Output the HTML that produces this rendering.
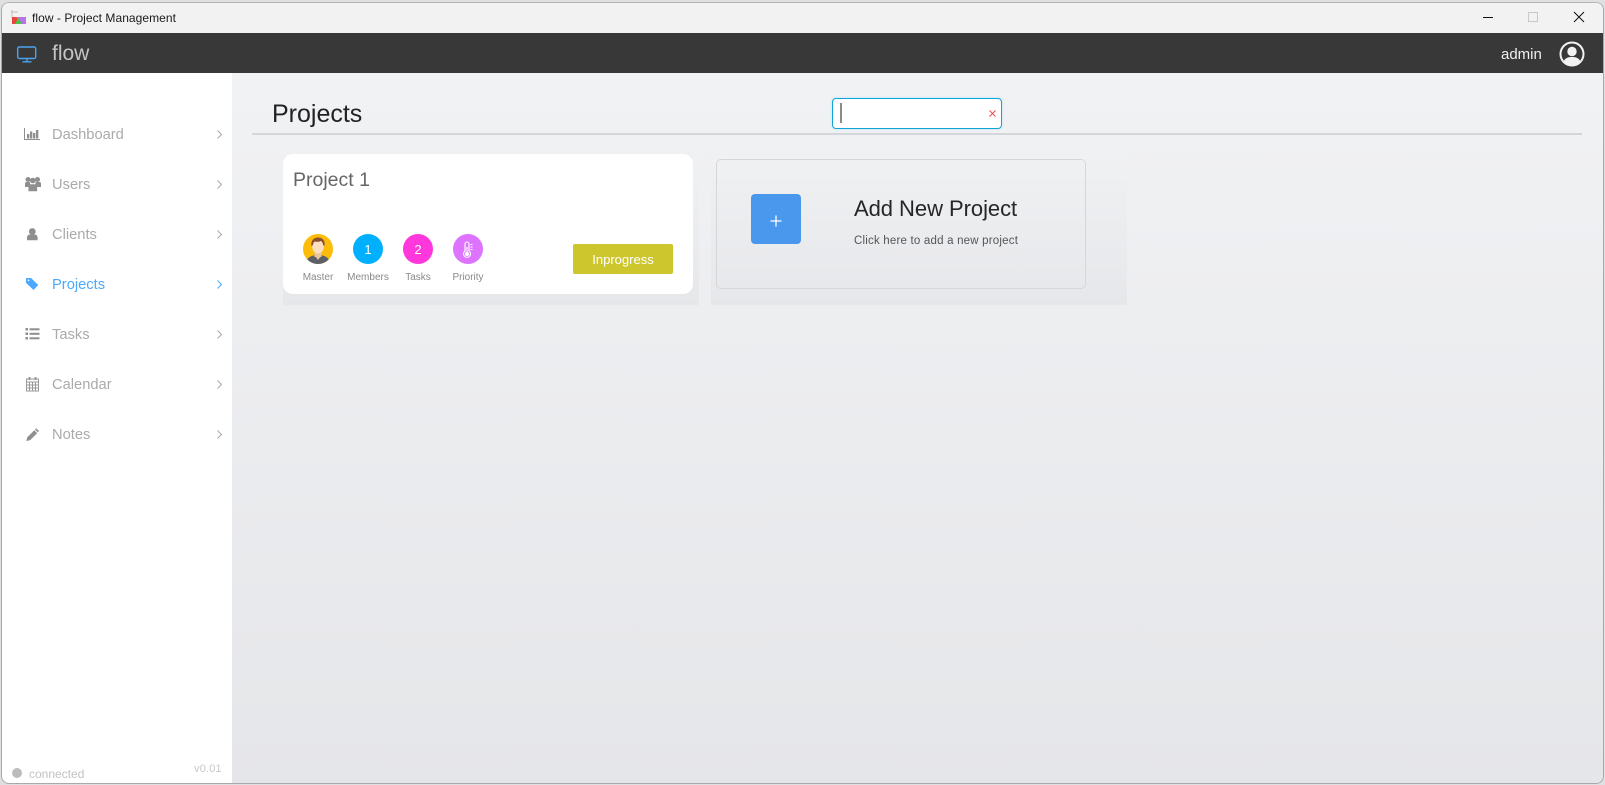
<!DOCTYPE html>
<html><head><meta charset="utf-8"><title>flow - Project Management</title>
<style>
*{box-sizing:border-box;margin:0;padding:0}
html,body{width:1605px;height:785px;overflow:hidden;background:#dfe0e2;font-family:"Liberation Sans",sans-serif}
.a{position:absolute;white-space:nowrap}
#win{position:absolute;left:1px;top:2px;width:1603px;height:782px;border:1px solid #a9a9a9;border-top-color:#b5b5b5;border-radius:8px;overflow:hidden;background:#fff}
.abs{position:absolute;left:0;top:0;width:1605px;height:785px}
.nav{position:absolute;left:52px;font-size:14.7px;color:#aaa;line-height:20px;height:20px}
.lab{position:absolute;font-size:10px;color:#8a8a8a;text-align:center;width:60px;top:271.500px;line-height:12px}
.cir{position:absolute;width:30px;height:30px;border-radius:50%;top:234px;color:#fff;text-align:center;font-size:13px;line-height:31px}
</style></head><body>
<div id="win"><div class="abs" style="left:-2px;top:-3px">
<div class="a" style="left:0;top:0;width:1605px;height:33px;background:#f2f2f2"></div>
<div class="a" style="left:0;top:33px;width:1605px;height:40px;background:#383838"></div>
<div class="a" style="left:232px;top:73px;width:1373px;height:712px;background:linear-gradient(#f1f2f4,#e5e6e9)"></div>

<svg class="a" style="left:10px;top:9px" width="17" height="16" viewBox="0 0 17 16"><path d="M2 1v8M1 3h7" stroke="#c9b9b9" fill="none"/><rect x="2" y="8" width="14" height="7" fill="#b873e6"/><rect x="2" y="8" width="5" height="7" fill="#e8453c"/><path d="M5 15l3.500-6 3.500 6z" fill="#4bc44b"/></svg>
<div class="a" style="left:32px;top:10px;font-size:12px;line-height:16px;color:#1a1a1a;letter-spacing:.05px">flow - Project Management</div>
<svg class="a" style="left:1475px;top:5px" width="120" height="24" viewBox="0 0 120 24" fill="none"><path d="M8 12.500h10" stroke="#111"/><rect x="53.500" y="7.500" width="9" height="9" stroke="#c8c8c8"/><path d="M99 7l10 10M109 7l-10 10" stroke="#111"/></svg>

<svg class="a" style="left:16px;top:45px" width="22" height="18" viewBox="0 0 22 18" fill="none" stroke="#4aa3f0" stroke-width="1.400"><rect x="1.700" y="2" width="18" height="11.500" rx="1.500"/><path d="M11 14v2.500M6.500 16.800h9"/></svg>
<div class="a" style="left:52px;top:41px;font-size:21px;line-height:26px;color:#c4c4c4">flow</div>
<div class="a" style="left:1501px;top:46px;font-size:15px;line-height:18px;color:#f0f0f0">admin</div>
<svg class="a" style="left:1559px;top:41px" width="26" height="26" viewBox="0 0 26 26"><circle cx="13" cy="13" r="11.500" fill="#383838" stroke="#f2f2f2" stroke-width="2"/><circle cx="13" cy="10.500" r="4.700" fill="#f2f2f2"/><path d="M4.500 20.500c2-4 5-4.500 8.500-4.500s6.500.5 8.500 4.500a11.500 11.500 0 0 1-17 0z" fill="#f2f2f2"/></svg>

<!-- sidebar -->
<svg class="a" style="left:23px;top:125px" width="18" height="18" viewBox="0 0 18 18" fill="#8f8f8f"><path d="M1 3h1v11h15v1H1z"/><rect x="4" y="9" width="2.300" height="4.500"/><rect x="7" y="6.500" width="2.300" height="7"/><rect x="10" y="8" width="2.300" height="5.500"/><rect x="13" y="5" width="2.300" height="8.500"/></svg>
<div class="nav" style="top:125px">Dashboard</div>
<svg class="a" style="left:24px;top:175px" width="18" height="18" viewBox="0 0 18 18" fill="#8f8f8f"><circle cx="4" cy="4.500" r="2.500"/><circle cx="13.500" cy="4.500" r="2.500"/><circle cx="8.800" cy="5.500" r="2.800"/><path d="M1 8.500c0-1 .8-1.500 1.700-1.500h3.300v5H1zM11.500 7h3.800c.9 0 1.700.5 1.700 1.500V12h-5.500z"/><path d="M4.500 11c0-1 1-1.800 2-1.800h4.600c1 0 2 .8 2 1.800v5.300H4.500z"/></svg>
<div class="nav" style="top:175px">Users</div>
<svg class="a" style="left:25px;top:225px" width="16" height="18" viewBox="0 0 16 18" fill="#8f8f8f"><circle cx="7.300" cy="6.500" r="3.400"/><path d="M2 15.200v-2.700c0-2 1.500-3 3-3h4.600c1.500 0 3 1 3 3v2.700z"/></svg>
<div class="nav" style="top:225px">Clients</div>
<svg class="a" style="left:25px;top:275px" width="16" height="18" viewBox="0 0 16 18" fill="#4aa8ff"><path d="M1 3h5l7.300 7-4.800 5-7.500-7.300z"/><circle cx="3.500" cy="5.300" r=".9" fill="#fff"/></svg>
<div class="nav" style="top:275px;color:#4aa8ff">Projects</div>
<svg class="a" style="left:24px;top:325px" width="18" height="18" viewBox="0 0 18 18" fill="#8f8f8f"><rect x="1.500" y="3" width="2.500" height="2.500"/><rect x="1.500" y="7.500" width="2.500" height="2.500"/><rect x="1.500" y="12" width="2.500" height="2.500"/><rect x="5.500" y="3.300" width="10" height="2"/><rect x="5.500" y="7.800" width="10" height="2"/><rect x="5.500" y="12.300" width="10" height="2"/></svg>
<div class="nav" style="top:325px">Tasks</div>
<svg class="a" style="left:25px;top:375px" width="16" height="18" viewBox="0 0 16 18" fill="none" stroke="#999"><rect x="1.500" y="4" width="12" height="12"/><path d="M1.500 7h12M1.500 10h12M1.500 13h12M4.500 7v9M7.500 7v9M10.500 7v9"/><path d="M4.500 2v3M10.500 2v3" stroke-width="2"/></svg>
<div class="nav" style="top:375px">Calendar</div>
<svg class="a" style="left:25px;top:425px" width="16" height="18" viewBox="0 0 16 18" fill="#8f8f8f"><path d="M1.300 16l1-3.800 7-7 2.900 2.900-7 7z"/><path d="M10 4.500l1.200-1.300 2.800 2.800-1.200 1.300z"/></svg>
<div class="nav" style="top:425px">Notes</div>
<svg class="a" style="left:216px;top:124px" width="8" height="320" viewBox="0 0 8 320" fill="none" stroke="#a8a8a8" stroke-width="1"><path d="M1.500 6.500l4 4-4 4M1.500 56.500l4 4-4 4M1.500 106.500l4 4-4 4M1.500 206.500l4 4-4 4M1.500 256.500l4 4-4 4M1.500 306.500l4 4-4 4"/><path d="M1.500 156.500l4 4-4 4" stroke="#4aa8ff"/></svg>
<div class="a" style="left:12px;top:768px;width:10px;height:10px;border-radius:50%;background:#bcbcbc"></div>
<div class="a" style="left:29px;top:767px;font-size:12px;line-height:14px;color:#c2c2c2">connected</div>
<div class="a" style="left:194px;top:762px;font-size:11.300px;line-height:14px;color:#c8c8c8">v0.01</div>

<!-- header -->
<div class="a" style="left:272px;top:99px;font-size:25px;line-height:30px;color:#222">Projects</div>
<div class="a" style="left:252px;top:133px;width:1330px;height:2px;background:#d5d6d9"></div>
<div class="a" style="left:832px;top:98px;width:170px;height:31px;background:#fff;border:1.500px solid #0ea5d8;border-radius:4px;box-shadow:0 0 3px #bfe6f5"></div>
<div class="a" style="left:840px;top:103px;width:2px;height:20px;background:#8a8a8a"></div>
<svg class="a" style="left:988px;top:108.500px" width="9" height="9" viewBox="0 0 9 9"><path d="M1.500 1.500l6 6M7.500 1.500l-6 6" stroke="#f0484e" stroke-width="1"/></svg>

<!-- project card -->
<div class="a" style="left:283px;top:155px;width:416px;height:150px;background:linear-gradient(#f0f1f3,#e6e7ea)"></div>
<div class="a" style="left:283px;top:154px;width:410px;height:140px;background:#fff;border-radius:10px"></div>
<div class="a" style="left:293px;top:166.500px;font-size:19.500px;line-height:26px;color:#666">Project 1</div>
<svg class="a" style="left:303px;top:234px" width="30" height="30" viewBox="0 0 30 30"><defs><clipPath id="c"><circle cx="15" cy="15" r="15"/></clipPath></defs><g clip-path="url(#c)"><rect width="30" height="30" fill="#fdbb0a"/><path d="M3 30c0-6 5-9 12-9s12 3 12 9z" fill="#5c6066"/><rect x="11.500" y="17" width="7" height="6" fill="#e9c49c"/><path d="M12 22l3 4 3-4z" fill="#e9c49c"/><ellipse cx="15" cy="12.500" rx="5.800" ry="7" fill="#fbdfc0"/><path d="M8.500 12c-1-6 3-8.500 6.500-8.500s7.500 2 6.500 8.500l-1.500-1c0-2-1-3.500-2-4-2 1-5 1-6.500.5-1 1-1.500 2.500-1.500 3.500z" fill="#8a4f2b"/></g></svg>
<div class="cir" style="left:353px;background:#00b0ff">1</div>
<div class="cir" style="left:403px;background:#ff37dc">2</div>
<div class="cir" style="left:453px;background:#de73ff"></div>
<svg class="a" style="left:461px;top:241px" width="14" height="17" viewBox="0 0 14 17" fill="none" stroke="#fff" stroke-width="1.100"><path d="M4 3a2 2 0 0 1 4 0v7a3.500 3.500 0 1 1-4 0z"/><path d="M6 6v6" /><circle cx="6" cy="13" r="1.500" fill="#fff"/><path d="M9.500 3.500h2M9.500 6h2M9.500 8.500h2"/></svg>
<div class="lab" style="left:288px">Master</div>
<div class="lab" style="left:338px">Members</div>
<div class="lab" style="left:388px">Tasks</div>
<div class="lab" style="left:438px">Priority</div>
<div class="a" style="left:573px;top:244px;width:100px;height:30px;background:#cdc72d;border-radius:2px;color:#fff;font-size:13px;line-height:31px;text-align:center">Inprogress</div>

<!-- add new -->
<div class="a" style="left:711px;top:155px;width:416px;height:150px;background:linear-gradient(#f0f1f3,#e6e7ea)"></div>
<div class="a" style="left:716px;top:159px;width:370px;height:130px;border:1px solid #d5d6d9;border-radius:5px"></div>
<div class="a" style="left:751px;top:194px;width:50px;height:50px;background:#4a97ee;border-radius:4px;color:#fff"></div>
<svg class="a" style="left:770px;top:215px" width="12" height="12" viewBox="0 0 12 12"><path d="M6 .5v11M.5 6h11" stroke="#fff" stroke-width="1.300"/></svg>
<div class="a" style="left:854px;top:195px;font-size:22px;line-height:28px;color:#262626;letter-spacing:-.05px">Add New Project</div>
<div class="a" style="left:854px;top:233px;font-size:11.500px;line-height:16px;color:#555;letter-spacing:.2px">Click here to add a new project</div>
</div></div>
</body></html>
